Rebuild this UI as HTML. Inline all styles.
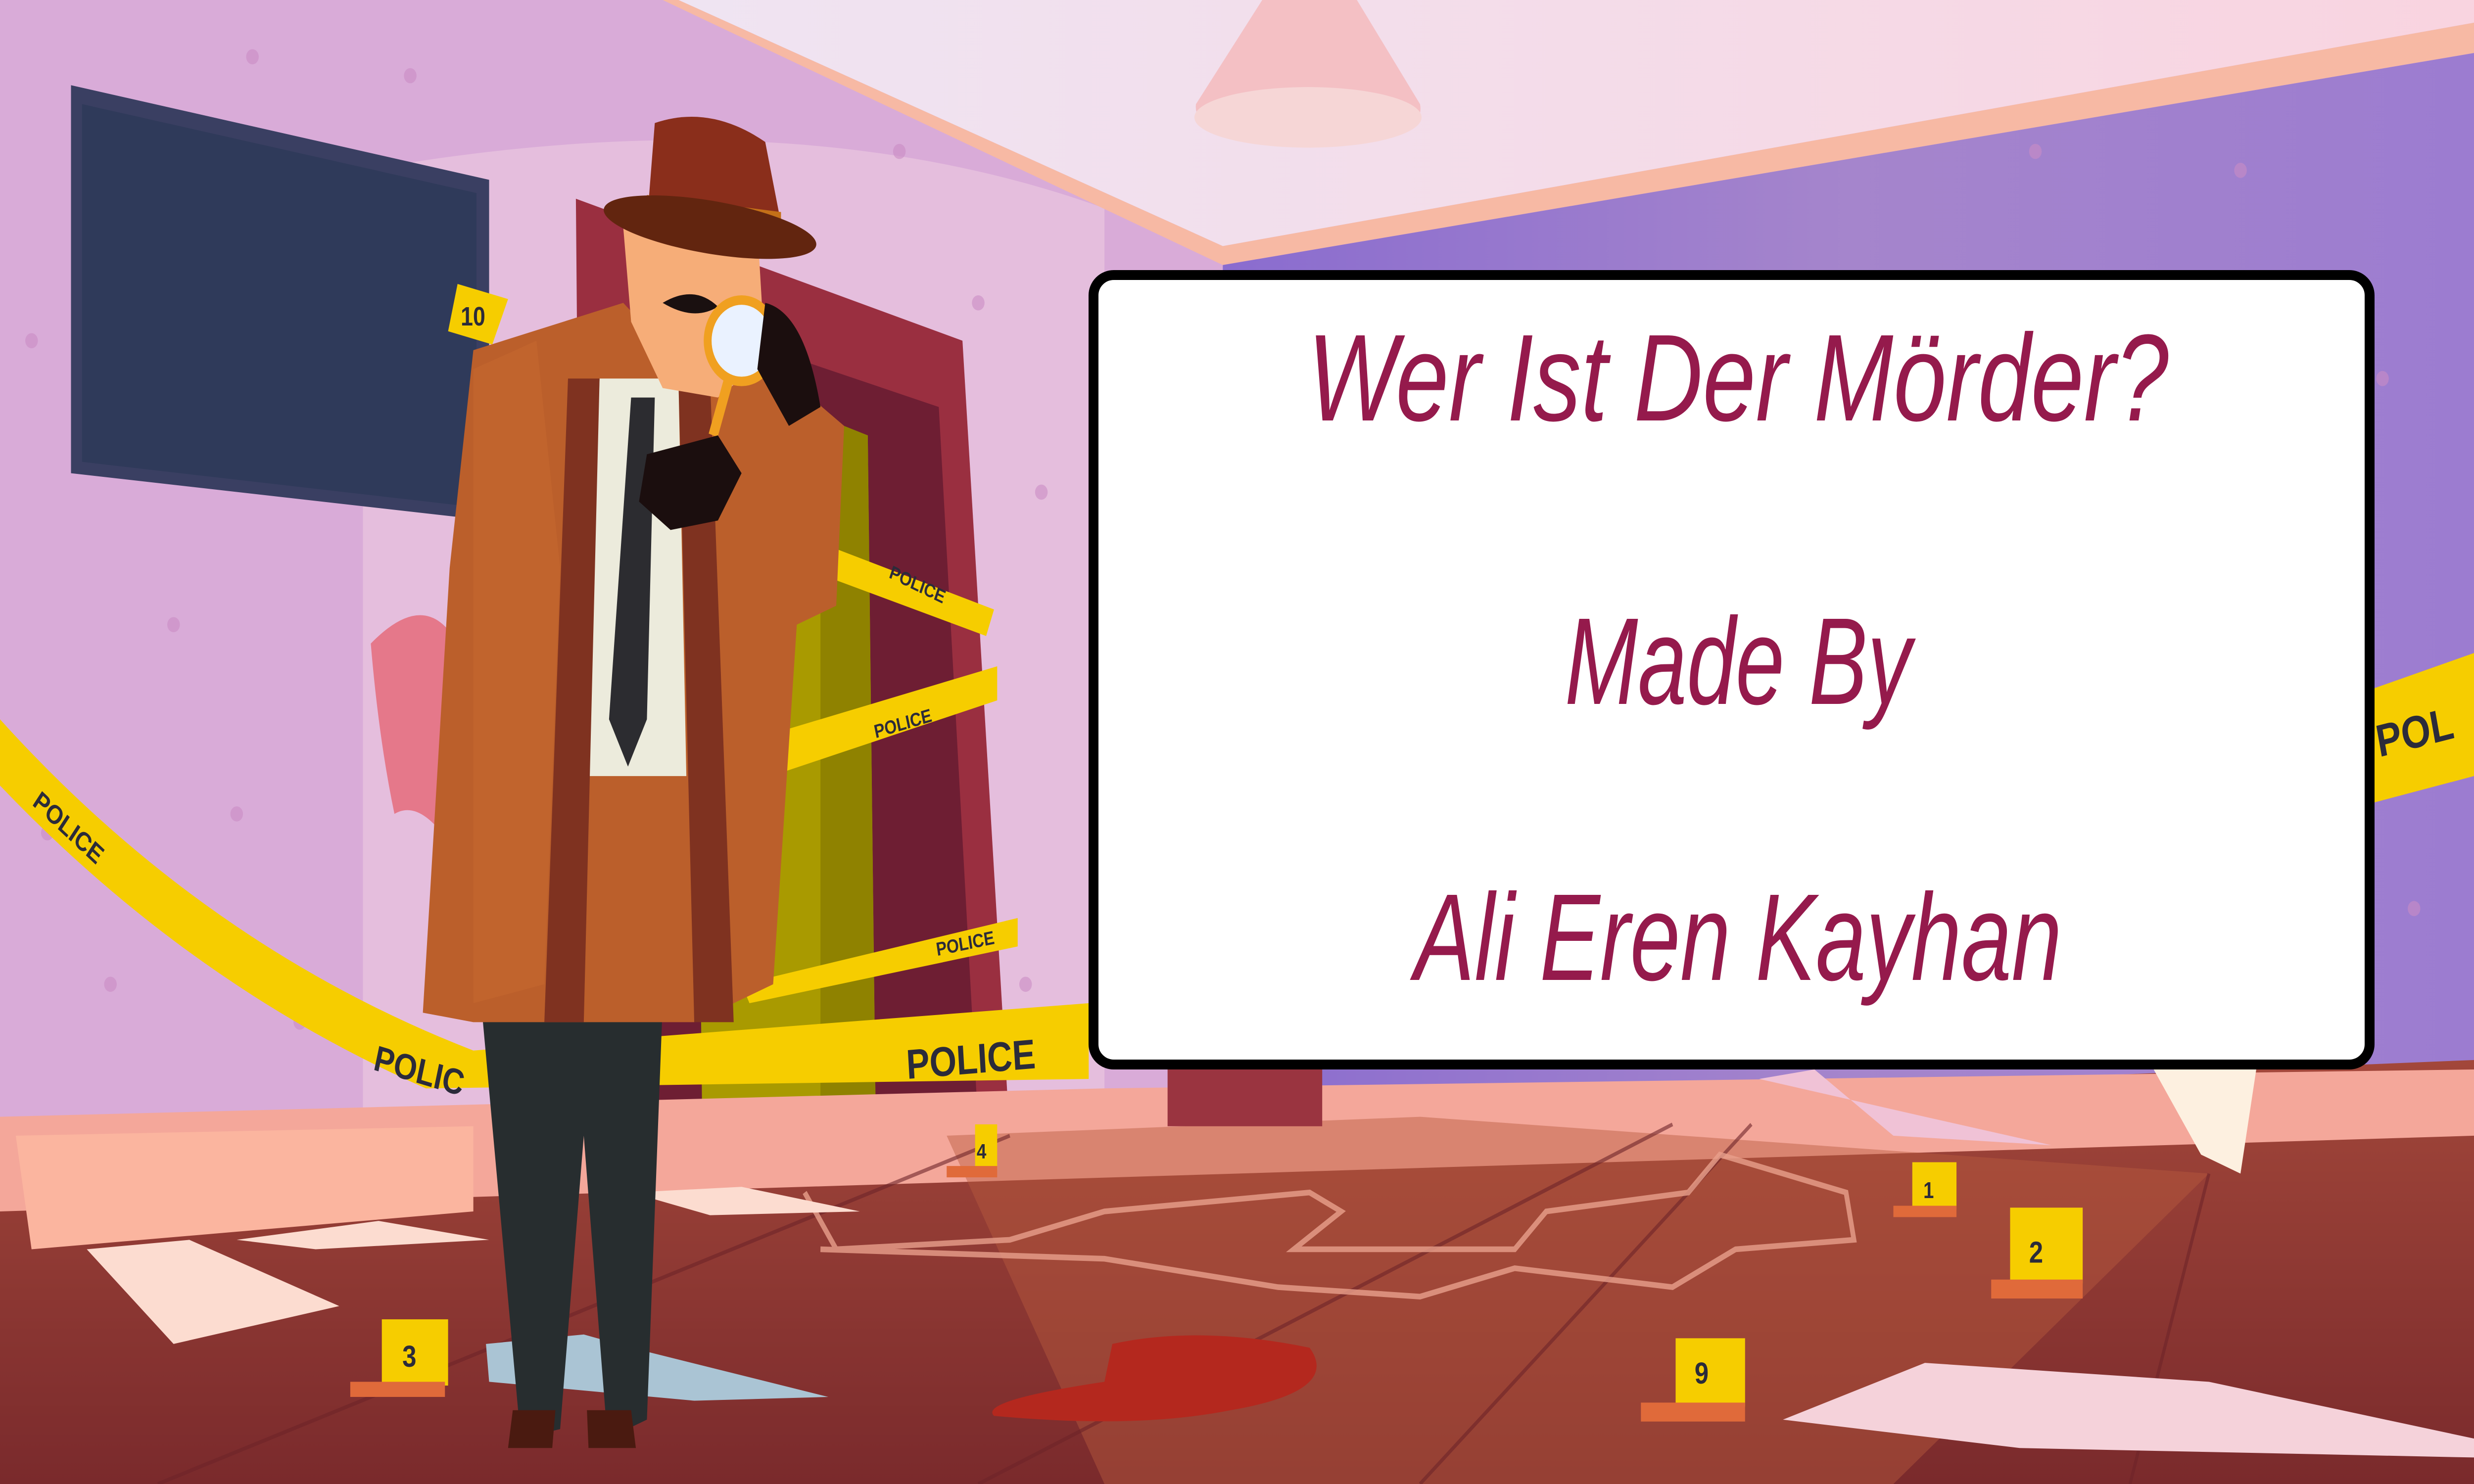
<!DOCTYPE html>
<html><head><meta charset="utf-8"><style>
html,body{margin:0;padding:0;width:100vw;height:100vh;overflow:hidden;background:#d9a9d6;position:relative}
svg{position:absolute;left:0;top:0;width:100vw;height:100vh}
.box{position:absolute;left:44vw;top:18.2vh;width:51.17vw;height:52.53vh;border:0.67vh solid #000;border-radius:1.7vh;background:#fff}
.t{position:absolute;left:44.33vw;width:51.83vw;text-align:center;color:#951a4c;font-family:"Liberation Sans Narrow","Liberation Sans",sans-serif;font-style:italic;font-size:8.333vh;line-height:1;white-space:nowrap;transform:scaleX(0.73);transform-origin:50% 50%}
</style></head><body>
<svg viewBox="0 0 1568 784" preserveAspectRatio="none">
<defs>
<linearGradient id="rw" x1="0" y1="0" x2="1" y2="0"><stop offset="0" stop-color="#8a6ccf"/><stop offset="0.5" stop-color="#a585cc"/><stop offset="1" stop-color="#9c7cd0"/></linearGradient>
<linearGradient id="fl" x1="0" y1="0" x2="0" y2="1"><stop offset="0" stop-color="#a2473a"/><stop offset="1" stop-color="#7a2a2c"/></linearGradient>
<linearGradient id="cl" x1="0" y1="0" x2="1" y2="0"><stop offset="0" stop-color="#efe4f2"/><stop offset="1" stop-color="#f9d4e0"/></linearGradient>
</defs>
<rect x="0" y="0" width="1568" height="784" fill="#d9abd8"/>
<path d="M230 90 Q500 50 700 110 L700 600 L230 600 Z" fill="#e9c6e0" opacity="0.7"/>
<path d="M430 0 L1568 0 L1568 12 L775 130 Z" fill="url(#cl)"/>
<path d="M430 0 L775 130 L1568 12 L1568 28 L775 140 L420 0Z" fill="#f7b9a4"/>
<path d="M775 140 L1568 28 L1568 600 L775 600 Z" fill="url(#rw)"/>
<path d="M800 0 L860 0 L900 55 Q905 75 830 78 Q755 75 758 55 Z" fill="#f4c0c4"/>
<ellipse cx="829" cy="62" rx="72" ry="16" fill="#f6d6d6"/>
<g fill="#c98cc4" opacity="0.6">
<circle cx="70" cy="70" r="4"/><circle cx="160" cy="30" r="4"/><circle cx="260" cy="40" r="4"/><circle cx="20" cy="180" r="4"/><circle cx="110" cy="330" r="4"/><circle cx="30" cy="440" r="4"/><circle cx="150" cy="430" r="4"/><circle cx="70" cy="520" r="4"/><circle cx="190" cy="540" r="4"/><circle cx="570" cy="80" r="4"/><circle cx="620" cy="160" r="4"/><circle cx="660" cy="260" r="4"/><circle cx="650" cy="520" r="4"/><circle cx="1290" cy="80" r="4"/><circle cx="1420" cy="90" r="4"/><circle cx="1510" cy="200" r="4"/><circle cx="1530" cy="480" r="4"/></g>
<path d="M45 45 L310 95 L310 275 L45 250 Z" fill="#3a3f62"/>
<path d="M52 55 L302 102 L302 268 L52 244 Z" fill="#2f3a5a"/>
<path d="M365 105 L610 180 L640 600 L370 600 Z" fill="#9a2f40"/>
<path d="M400 160 L595 215 L620 595 L405 595 Z" fill="#6e1e33"/>
<path d="M440 200 L550 230 L555 590 L445 590Z" fill="#a99a00"/>
<path d="M520 220 L550 230 L555 590 L520 590Z" fill="#8f8200"/>
<path d="M235 340 Q270 310 290 340 L295 460 Q270 420 250 430 Q240 390 235 340Z" fill="#e5788a"/>
<path d="M0 620 L690 590 L1568 560 L1568 784 L0 784 Z" fill="url(#fl)"/>
<path d="M0 590 L700 575 L1568 565 L1568 600 L0 640 Z" fill="#f4a79a"/>
<path d="M10 600 L300 595 L300 640 L20 660 Z" fill="#fbb59f"/>
<path d="M600 600 L900 590 L1400 620 L1200 784 L700 784 Z" fill="#b85a3e" opacity="0.45"/>
<path d="M620 784 L1060 594 M900 784 L1110 594 M100 784 L640 600 M1350 784 L1400 620" stroke="#6e2429" stroke-width="2" opacity="0.6"/>
<path d="M705 710 Q760 700 830 712 Q850 735 780 745 Q720 755 630 748 Q620 740 700 730 Z" fill="#b4281e"/>
<path d="M510 630 L530 660 L640 655 L700 640 L830 630 L850 640 L820 660 L960 660 L980 640 L1070 630 L1090 610 L1170 630 L1175 655 L1100 660 L1060 680 L960 670 L900 685 L810 680 L700 665 L520 660" fill="none" stroke="#e8a08c" stroke-width="3" opacity="0.8"/>
<path d="M55 660 L120 655 L215 690 L110 710 Z" fill="#fcdcd0"/>
<path d="M150 655 L240 645 L310 655 L200 660 Z" fill="#fcdcd0"/>
<path d="M400 630 L470 627 L545 640 L450 642Z" fill="#fcdcd0"/>
<path d="M1130 750 L1220 720 L1400 730 L1568 760 L1568 770 L1280 765 Z" fill="#f5d2da"/>
<path d="M1115 570 L1150 565 L1200 600 L1300 605 L1220 590 Z" fill="#f0c2d6"/>
<path d="M1365 565 L1430 565 L1420 620 L1395 610 Z" fill="#fdf0e0"/>
<rect x="740" y="555" width="98" height="40" fill="#9a3440"/>
<path d="M0 380 L0 415 Q120 520 270 575 L690 570 L690 530 L300 555 Q130 500 0 380Z" fill="#f6cd00"/>
<path d="M440 400 L632 352 L632 370 L460 418Z" fill="#f6cd00"/>
<path d="M530 290 L630 322 L625 336 L525 305Z" fill="#f6cd00"/>
<path d="M470 520 L645 485 L645 500 L475 530Z" fill="#f6cd00"/>
<path d="M1500 365 L1568 345 L1568 410 L1500 425 Z" fill="#f6cd00"/>
<g font-family="Liberation Sans" font-weight="bold" fill="#2b2b3a">
<text x="20" y="425" font-size="14" transform="rotate(38 20 425)">POLICE</text>
<text x="236" y="565" font-size="19" transform="rotate(14 236 565)">POLIC</text>
<text x="575" y="570" font-size="22" transform="rotate(-4 575 570)">POLICE</text>
<text x="555" y="390" font-size="10" transform="rotate(-14 555 390)">POLICE</text>
<text x="563" y="305" font-size="10" transform="rotate(22 563 305)">POLICE</text>
<text x="594" y="505" font-size="10" transform="rotate(-10 594 505)">POLICE</text>
<text x="1508" y="400" font-size="24" transform="rotate(-12 1508 400)">POL</text>
</g>
<g font-family="Liberation Sans" font-weight="bold" fill="#2b2b3a" font-size="16">
<path d="M290 150 L322 158 L312 182 L284 175Z" fill="#f6cd00"/><text x="292" y="172" font-size="14">10</text>
<rect x="242" y="697" width="42" height="35" fill="#f6cd00"/><rect x="222" y="730" width="60" height="8" fill="#e06a3a"/><text x="255" y="722">3</text>
<rect x="618" y="594" width="14" height="24" fill="#f6cd00"/><rect x="600" y="616" width="32" height="6" fill="#e06a3a"/><text x="619" y="612" font-size="11">4</text>
<rect x="1212" y="614" width="28" height="25" fill="#f6cd00"/><rect x="1200" y="637" width="40" height="6" fill="#e06a3a"/><text x="1219" y="633" font-size="12">1</text>
<rect x="1274" y="638" width="46" height="40" fill="#f6cd00"/><rect x="1262" y="676" width="58" height="10" fill="#e06a3a"/><text x="1286" y="667">2</text>
<rect x="1062" y="707" width="44" height="36" fill="#f6cd00"/><rect x="1040" y="741" width="66" height="10" fill="#e06a3a"/><text x="1074" y="731">9</text>
</g>
<path d="M308 710 L370 705 L400 712 L525 738 L440 740 L310 730Z" fill="#aac4d4"/>
<path d="M305 530 L420 530 L410 750 L385 760 L370 600 L355 755 L330 760 Z" fill="#272d2f"/>
<path d="M325 745 L352 745 L350 765 L322 765Z M372 745 L400 745 L403 765 L373 765Z" fill="#4a1a10"/>
<path d="M300 185 L395 160 L440 200 L500 200 L535 225 L530 320 L505 330 L490 520 L440 540 L300 540 L268 535 L285 300 Z" fill="#bb5f2b"/>
<path d="M300 195 L340 180 L355 300 L345 520 L300 530 Z" fill="#c4682f" opacity="0.6"/>
<path d="M380 200 L430 200 L435 410 L370 410 Z" fill="#ecebdc"/>
<path d="M400 210 L415 210 L410 380 L398 405 L386 380 Z" fill="#2c2c30"/>
<path d="M360 200 L380 200 L370 540 L345 540 Z" fill="#7f3220"/>
<path d="M430 200 L450 200 L465 540 L440 540 Z" fill="#7f3220"/>
<path d="M395 120 L480 120 L485 190 L455 210 L420 205 L400 170 Z" fill="#f6ad78"/>
<path d="M420 160 Q440 150 455 162 Q440 170 420 160Z" fill="#1a1010"/>
<path d="M415 65 Q450 55 485 75 L495 118 L410 118 Z" fill="#8a2e1b"/>
<path d="M410 103 L495 112 L495 123 L410 113Z" fill="#c47018"/>
<ellipse cx="450" cy="120" rx="68" ry="14" fill="#62250f" transform="rotate(8 450 120)"/>
<circle cx="470" cy="180" r="24" fill="#f0a020"/><circle cx="470" cy="180" r="19" fill="#eaf2ff"/>
<path d="M462 200 L452 230" stroke="#f0a020" stroke-width="6"/>
<path d="M485 160 Q510 165 520 215 L500 225 L480 195 Z" fill="#1b0e0e"/>
<path d="M410 240 L455 230 L470 250 L455 275 L425 280 L405 265Z" fill="#1b0e0e"/>
</svg>
<div class="box"></div>
<div class="t" style="top:21.3vh;transform:scaleX(0.77)">Wer Ist Der Mörder?</div>
<div class="t" style="top:40.4vh;transform:scaleX(0.71)">Made By</div>
<div class="t" style="top:59vh">Ali Eren Kayhan</div>
</body></html>
